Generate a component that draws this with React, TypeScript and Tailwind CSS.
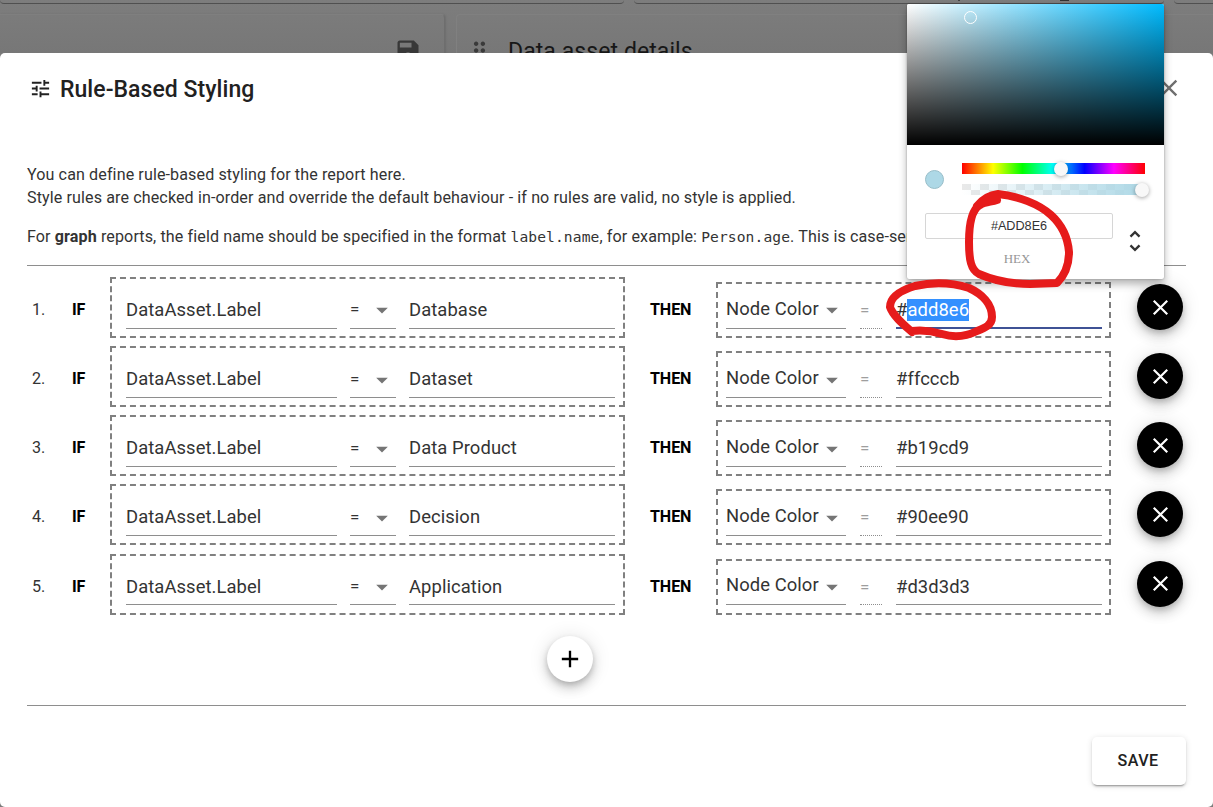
import React from "react";

const rules = [
  { value: "Database", color: "#add8e6", active: true },
  { value: "Dataset", color: "#ffcccb", active: false },
  { value: "Data Product", color: "#b19cd9", active: false },
  { value: "Decision", color: "#90ee90", active: false },
  { value: "Application", color: "#d3d3d3", active: false },
];

function Caret() {
  return (
    <svg width="28" height="28" viewBox="0 0 24 24" className="mb-[4px] shrink-0 fill-[#757575]">
      <path d="M7 10l5 5 5-5z" />
    </svg>
  );
}

function CrossIcon() {
  return (
    <svg width="27" height="27" viewBox="0 0 24 24" fill="none" stroke="currentColor" strokeWidth="1.9">
      <path d="M6 18L18 6M6 6l12 12" />
    </svg>
  );
}

function Rule({ index, value, color, active }: { index: number; value: string; color: string; active: boolean }) {
  return (
    <div className="flex h-[69.15px] items-start">
      <div className="w-[45px] pt-[21px] pl-[5px] text-[16.1px] leading-6 tracking-[-0.1px]">{index}.</div>
      <div className="w-[38px] pt-[21px] text-[16.1px] leading-6 font-bold tracking-[-0.2px] text-black">IF</div>
      <div className="flex h-[61px] w-[515px] border-2 border-dashed border-[#808080] pt-[18px] pl-[14px] text-[18.4px] leading-[26px] tracking-[0.08px]">
        <div className="h-[31.75px] w-[211px] border-b border-[#8e8e8e]">DataAsset.Label</div>
        <div className="ml-[13px] flex h-[31.75px] w-[46px] items-center justify-between border-b border-[#8e8e8e] text-[17px]">
          <span className="-mt-[6px]">=</span>
          <Caret />
        </div>
        <div className="ml-[13px] h-[31.75px] w-[206px] border-b border-[#8e8e8e]">{value}</div>
      </div>
      <div className="w-[91px] pt-[21px] pl-[25px] text-[16.1px] leading-6 font-bold tracking-[-0.1px] text-black">THEN</div>
      <div className="mt-[5px] flex h-[56px] w-[395px] border-2 border-dashed border-[#808080] pt-[13px] pl-[8px] text-[18.4px] leading-[26px] tracking-[0.08px]">
        <div className="flex h-[31.75px] w-[120px] items-center border-b border-[#8e8e8e]">
          <span className="-mt-[7px] w-[92px] whitespace-nowrap">Node Color</span>
          <Caret />
        </div>
        <div className="ml-[14px] h-[31.75px] w-[22px] border-b border-dotted border-[#8e8e8e] text-[17px] text-[#9e9e9e]">=</div>
        {active ? (
          <div className="ml-[14px] h-[31.75px] w-[206px] border-b-2 border-[#3f5295]">
            #<span className="inline-block h-[22px] bg-[#3390ff] leading-[22px] text-white">{color.slice(1)}</span>
          </div>
        ) : (
          <div className="ml-[14px] h-[31.75px] w-[206px] border-b border-[#8e8e8e]">{color}</div>
        )}
      </div>
      <button className="mt-[7px] ml-[26px] flex size-[46px] items-center justify-center rounded-full bg-black text-white shadow-[0_3px_6px_-1px_rgba(0,0,0,0.2),0_7px_12px_rgba(0,0,0,0.14),0_1px_20px_rgba(0,0,0,0.12)]">
        <CrossIcon />
      </button>
    </div>
  );
}

function ColorPicker() {
  return (
    <div className="absolute top-1 left-[907px] h-[275px] w-[257px] rounded-[2px] bg-white shadow-[0_0_2px_rgba(0,0,0,0.3),0_5px_9px_rgba(0,0,0,0.3)]">
      <div className="relative h-[141px] overflow-hidden rounded-t-[2px] bg-[linear-gradient(to_top,#000,transparent),linear-gradient(to_right,#fff,#00bbff)]">
        <div className="absolute top-[7px] left-[57px] size-[13px] rounded-full border border-white" />
      </div>
      <div className="flex pt-[18px] pl-[18px]">
        <div className="mt-[7px] size-[19px] rounded-full border border-[#98bec9] bg-[#add8e6]" />
        <div className="ml-[18px] w-[183px]">
          <div className="relative h-[11px] bg-[linear-gradient(to_right,#f00_0%,#ff0_17%,#0f0_33%,#0ff_50%,#00f_67%,#f0f_83%,#f00_100%)]">
            <div className="absolute -top-px left-[92px] size-[14px] rounded-full bg-[#f8f8f8] shadow-[0_1px_4px_rgba(0,0,0,0.37)]" />
          </div>
          <div className="relative mt-[10px] h-[11px] bg-[linear-gradient(to_right,rgba(173,216,230,0),#add8e6),repeating-conic-gradient(#fff_0_25%,#e9e9e9_0_50%)] bg-[size:100%_100%,18px_12px]">
            <div className="absolute -top-px left-[173px] size-[14px] rounded-full bg-[#f8f8f8] shadow-[0_1px_4px_rgba(0,0,0,0.37)]" />
          </div>
        </div>
      </div>
      <div className="flex pt-[18px] pl-[18px]">
        <div className="w-[188px] text-center">
          <div className="h-[26px] rounded-[2px] border border-[#d6d6d6] font-['Liberation_Sans',sans-serif] text-[12.65px] leading-6 text-[#333]">#ADD8E6</div>
          <div className="mt-[12px] pr-[4px] font-['Liberation_Serif',serif] text-[13px] leading-4 text-[#969696]">HEX</div>
        </div>
        <svg width="28" height="28" viewBox="0 0 24 24" className="mt-[14px] ml-[8px] fill-[#333]">
          <path d="M12 5.83L15.17 9l1.41-1.41L12 3 7.41 7.59 8.83 9 12 5.83zM12 18.17L8.83 15l-1.42 1.41L12 21l4.59-4.59L15.17 15z" />
        </svg>
      </div>
    </div>
  );
}

export default function App() {
  return (
    <div className="relative h-[807px] w-[1213px] overflow-hidden bg-[#7b7b7b] font-[Roboto,sans-serif] text-[#333]">
      <div className="h-[53px] overflow-hidden bg-linear-to-b from-[#7d7d7d] to-[#777]">
        <div className="flex h-[4px] gap-[10px]">
          <div className="h-[4px] w-[624px] shrink-0 rounded-b-[5px] border-b border-[#505050]" />
          <div className="flex h-[4px] w-[530px] shrink-0 rounded-b-[5px] border-b border-[#505050] pl-[324px]">
            <div className="h-px w-[2px] bg-[#444]" />
            <div className="ml-[100px] h-px w-[9px] bg-[#333]" />
          </div>
          <div className="h-[4px] flex-1 rounded-bl-[5px] border-b border-[#505050]" />
        </div>
        <div className="mt-[10px] flex h-[80px] gap-[11px]">
          <div className="flex w-[445px] justify-end rounded-tr-[4px] border-t border-r border-t-[#7f7f7f] border-r-[#6e6e6e] pt-[22px] pr-[22px] shadow-[1px_0_2px_rgba(0,0,0,0.1)]">
            <svg width="28" height="28" viewBox="0 0 24 24" className="fill-[#383838]">
              <path d="M17 3H5c-1.11 0-2 .9-2 2v14c0 1.1.89 2 2 2h14c1.1 0 2-.9 2-2V7l-4-4zm-5 16c-1.66 0-3-1.34-3-3s1.34-3 3-3 3 1.34 3 3-1.34 3-3 3zm3-10H5V5h10v4z" />
            </svg>
          </div>
          <div className="flex flex-1 rounded-tl-[4px] border-t border-l border-t-[#808080] border-l-[#808080] pt-[22px] pl-[9px]">
            <svg width="27" height="27" viewBox="0 0 24 24" className="fill-[#3a3a3a]">
              <path d="M11 18c0 1.1-.9 2-2 2s-2-.9-2-2 .9-2 2-2 2 .9 2 2zm-2-8c-1.1 0-2 .9-2 2s.9 2 2 2 2-.9 2-2-.9-2-2-2zm0-6c-1.1 0-2 .9-2 2s.9 2 2 2 2-.9 2-2-.9-2-2-2zm6 4c1.1 0 2-.9 2-2s-.9-2-2-2-2 .9-2 2 .9 2 2 2zm0 2c-1.1 0-2 .9-2 2s.9 2 2 2 2-.9 2-2-.9-2-2-2zm0 6c-1.1 0-2 .9-2 2s.9 2 2 2 2-.9 2-2-.9-2-2-2z" />
            </svg>
            <span className="mt-px ml-[15px] text-[23px] leading-7 tracking-[0.08px] text-[#171717]">Data asset details</span>
          </div>
        </div>
      </div>

      <div className="flex h-[754px] flex-col rounded-[5px] bg-white px-[27px]">
        <div className="flex h-[72px] items-center">
          <svg width="23" height="23" viewBox="0 0 24 24" className="mb-[2px] ml-[2px] fill-[#212121]">
            <path d="M3 17v2h6v-2H3zM3 5v2h10V5H3zm10 16v-2h8v-2h-8v-2h-2v6h2zM7 9v2H3v2h4v2h2V9H7zm14 4v-2H11v2h10zm-6-4h2V7h4V5h-4V3h-2v6z" />
          </svg>
          <h1 className="mt-[2px] ml-[8px] text-[23px] font-medium tracking-[0.05px] text-[#212121]">Rule-Based Styling</h1>
          <svg width="28" height="28" viewBox="0 0 24 24" className="mr-[3px] mb-[2px] ml-auto fill-[#6f6f6f]">
            <path d="M19 6.41L17.59 5 12 10.59 6.41 5 5 6.41 10.59 12 5 17.59 6.41 19 12 13.41 17.59 19 19 17.59 13.41 12z" />
          </svg>
        </div>
        <div className="h-[140px] pt-[38px] text-[16.1px] leading-[23px] tracking-[0.105px] whitespace-nowrap">
          <p>You can define rule-based styling for the report here.</p>
          <p>Style rules are checked in-order and override the default behaviour - if no rules are valid, no style is applied.</p>
          <p className="mt-4">
            For <b>graph</b> reports, the field name should be specified in the format{" "}
            <code className="font-['DejaVu_Sans_Mono',monospace] text-[14.6px]">label.name</code>, for example:{" "}
            <code className="font-['DejaVu_Sans_Mono',monospace] text-[14.6px]">Person.age</code>. This is case-sensitive.
          </p>
        </div>
        <div className="border-t border-[#8e8e8e]" />
        <div className="mt-[11px] flex h-[346px] flex-col">
          {rules.map((rule, i) => (
            <Rule key={rule.value} index={i + 1} value={rule.value} color={rule.color} active={rule.active} />
          ))}
        </div>
        <div className="flex h-[82px] pt-[13px] pl-[520px]">
          <button className="flex size-[46px] items-center justify-center rounded-full bg-white text-black shadow-[0_3px_6px_-1px_rgba(0,0,0,0.2),0_7px_12px_rgba(0,0,0,0.14),0_1px_20px_rgba(0,0,0,0.12)]">
            <svg width="28" height="28" viewBox="0 0 24 24" fill="none" stroke="currentColor" strokeWidth="2">
              <path d="M12 5v14M5 12h14" />
            </svg>
          </button>
        </div>
        <div className="border-t border-[#8e8e8e]" />
        <div className="flex justify-end pt-[31px]">
          <button className="h-[48px] w-[94px] rounded-[5px] bg-white pr-[2px] text-[16.1px] font-medium tracking-[0.46px] text-[#212121] shadow-[0_3px_1px_-2px_rgba(0,0,0,0.2),0_2px_2px_rgba(0,0,0,0.14),0_1px_6px_rgba(0,0,0,0.12)]">SAVE</button>
        </div>
      </div>

      <ColorPicker />

      <svg width="1213" height="807" viewBox="0 0 1213 807" className="pointer-events-none absolute inset-0" fill="none" stroke="#e61b1b" strokeWidth="8" strokeLinecap="round" strokeLinejoin="round">
        <path d="M997 200C991 202 985 202 980 205C971 210 969 225 969 242C969 260 971 270 979 274C995 281 1012 284 1030 284L1057 283C1064 276 1069 266 1069 252C1068 239 1062 225 1051 215C1039 204 1018 196 998 194C989 195 982 200 977 206" />
        <path d="M912 332C904 325 893 316 890 307C890 297 902 290 915 286C933 282 953 283 969 288C982 294 992 304 992 317C992 325 985 328 977 331C967 336 955 338 942 334C929 330 921 330 912 331" />
      </svg>
    </div>
  );
}
